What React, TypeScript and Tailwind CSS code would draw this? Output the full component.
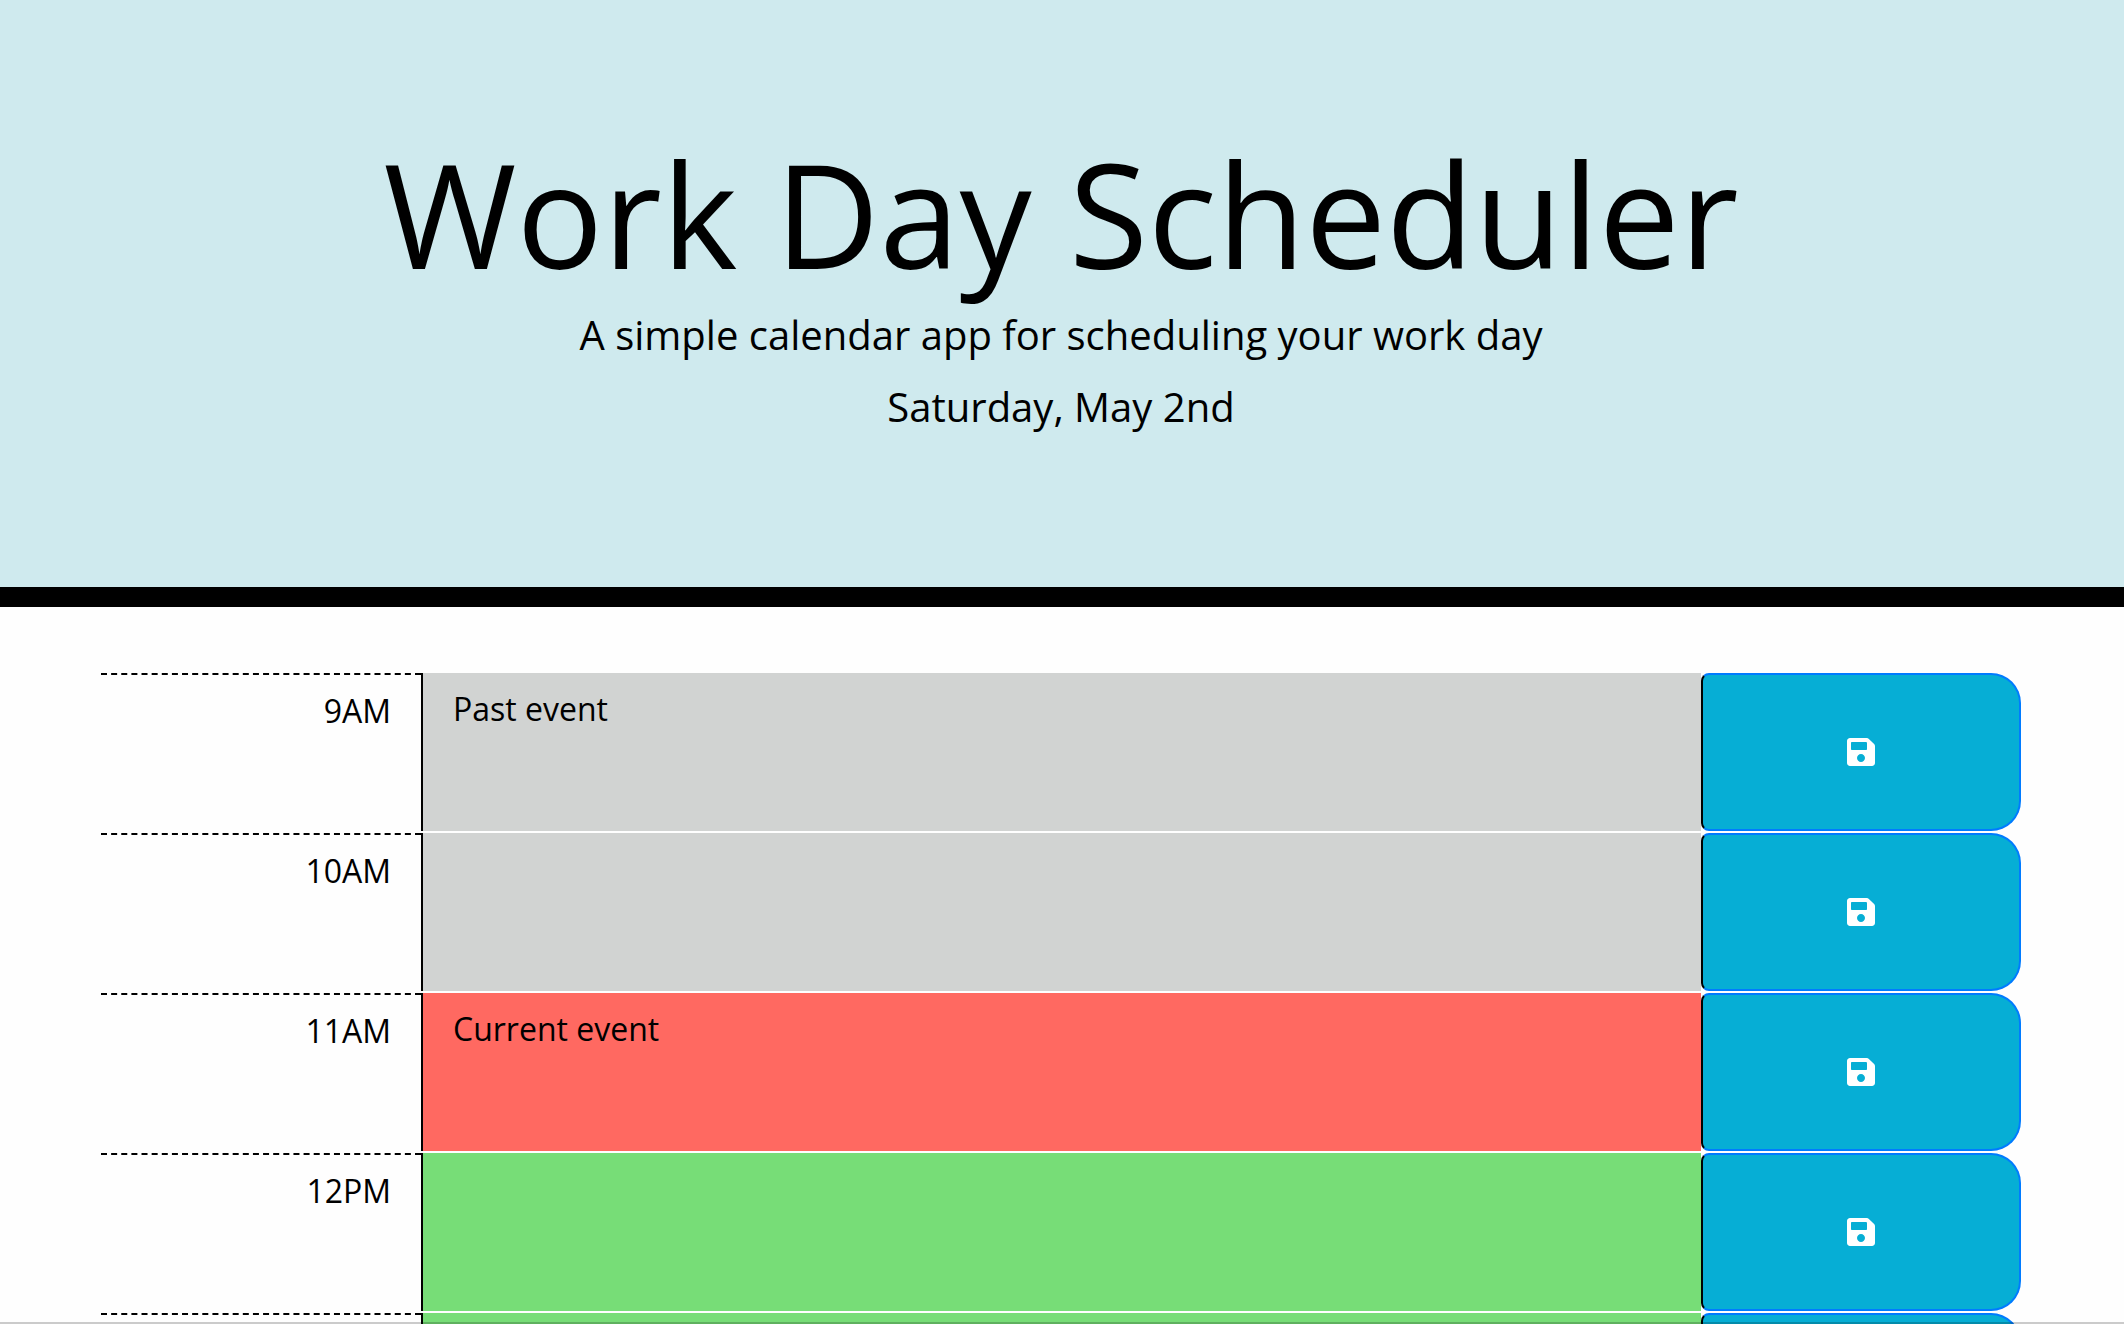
import { FaSave } from "react-icons/fa";
import clsx from "clsx";

type Phase = "past" | "present" | "future";

const slots: { hour: string; phase: Phase; text: string }[] = [
  { hour: "9AM", phase: "past", text: "Past event" },
  { hour: "10AM", phase: "past", text: "" },
  { hour: "11AM", phase: "present", text: "Current event" },
  { hour: "12PM", phase: "future", text: "" },
  { hour: "1PM", phase: "future", text: "" },
];

const phaseColor: Record<Phase, string> = {
  past: "bg-[#d1d3d2]",
  present: "bg-[#ff6961]",
  future: "bg-[#77dd77]",
};

function TimeBlock({ hour, phase, text }: { hour: string; phase: Phase; text: string }) {
  const id = `event-${hour}`;
  return (
    <div className="grid grid-cols-[1fr_4fr_1fr]">
      <label
        htmlFor={id}
        className="border-t-2 border-dashed border-black pt-3 pr-[30px] text-right text-[32px] leading-[48px]"
      >
        {hour}
      </label>
      <textarea
        id={id}
        defaultValue={text}
        className={clsx(
          "block h-[158px] w-full resize-none border-l-2 border-black py-3 pr-8 pl-[30px] text-[32px] leading-[48px] outline-none",
          phaseColor[phase],
        )}
      />
      <button
        type="button"
        aria-label={`Save ${hour}`}
        className="flex items-center justify-center rounded-l-lg rounded-r-[30px] border-2 border-[#007bff] border-l-black bg-[#06aed5] text-white"
      >
        <FaSave className="size-8" />
      </button>
    </div>
  );
}

export default function App() {
  return (
    <div className="relative h-screen overflow-hidden bg-[#fefefe] font-['Open_Sans',sans-serif] text-black">
      <header className="border-b-[20px] border-black bg-[#cfeaee] pt-[127px] pr-0.5 pb-[150px] text-center">
        <h1 className="text-[144px] leading-[172px]">Work Day Scheduler</h1>
        <p className="mt-1.5 text-[40px] leading-[60px]">A simple calendar app for scheduling your work day</p>
        <p className="mt-3 text-[40px] leading-[60px]">Saturday, May 2nd</p>
      </header>
      <main className="flex flex-col gap-0.5 pt-[66px] pr-[103px] pl-[101px]">
        {slots.map((slot) => (
          <TimeBlock key={slot.hour} {...slot} />
        ))}
      </main>
      <div className="absolute inset-x-0 bottom-0 h-0.5 bg-black/20" />
    </div>
  );
}
